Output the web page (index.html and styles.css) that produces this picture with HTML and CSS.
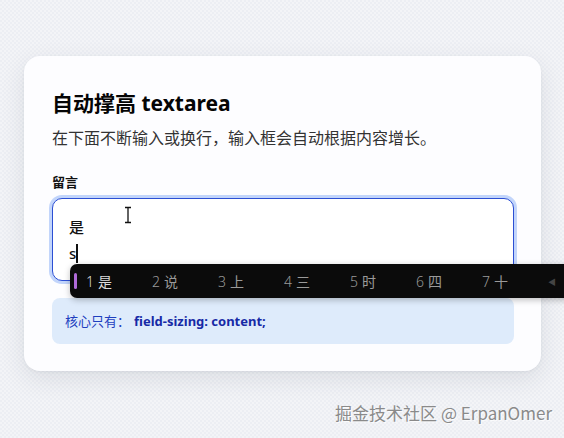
FILE: index.html
```html
<!DOCTYPE html>
<html lang="zh-CN">
<head>
<meta charset="utf-8">
<title>自动撑高 textarea</title>
<link rel="stylesheet" href="styles.css">
</head>
<body>
<main class="page">
  <section class="card">
    <h1 class="title">自动撑高 textarea</h1>
    <p class="desc">在下面不断输入或换行，输入框会自动根据内容增长。</p>
    <label class="label">留言</label>
    <div class="field">
      <div class="line">是</div>
      <div class="line">s<span class="caret"></span></div>
      <svg class="ibeam" width="10" height="18" viewBox="0 0 10 18">
        <path d="M2 1.5h6M2 16.5h6M5 1.5v15" stroke="#111" stroke-width="1.3" fill="none"/>
      </svg>
    </div>
    <div class="note">核心只有：<b class="code">field-sizing: content;</b></div>
  </section>
  <div class="ime">
    <span class="ime-mark"></span>
    <span class="cand active"><i>1</i>是</span>
    <span class="cand"><i>2</i>说</span>
    <span class="cand"><i>3</i>上</span>
    <span class="cand"><i>4</i>三</span>
    <span class="cand"><i>5</i>时</span>
    <span class="cand"><i>6</i>四</span>
    <span class="cand"><i>7</i>十</span>
    <span class="ime-arrow">◀</span>
  </div>
  <footer class="watermark">掘金技术社区 @ ErpanOmer</footer>
</main>
</body>
</html>
```

FILE: styles.css
```css
html, body {
  margin: 0;
  padding: 0;
}
body {
  width: 564px;
  height: 438px;
  overflow: hidden;
  background: #eceef3;
  background-image:
    linear-gradient(45deg, rgba(255,255,255,0.35) 25%, transparent 25%, transparent 75%, rgba(255,255,255,0.35) 75%),
    linear-gradient(45deg, rgba(255,255,255,0.35) 25%, transparent 25%, transparent 75%, rgba(255,255,255,0.35) 75%);
  background-size: 4px 4px;
  background-position: 0 0, 2px 2px;
  font-family: "Noto Sans", "Noto Sans CJK SC", sans-serif;
  color: #111;
}
.page {
  position: relative;
  height: 438px;
  padding-top: 56px;
  box-sizing: border-box;
}
.card {
  margin-left: 24px;
  width: 517px;
  box-sizing: border-box;
  padding: 33px 27px 27px 28px;
  background: #fdfdff;
  border-radius: 16px;
  box-shadow: 0 8px 24px rgba(40, 50, 70, 0.10), 0 1px 3px rgba(40, 50, 70, 0.06);
  display: flex;
  flex-direction: column;
}
.title {
  margin: 0;
  font-size: 21px;
  line-height: 28px;
  font-weight: 700;
  font-family: "Noto Sans", "Noto Sans CJK SC", sans-serif;
  color: #050505;
}
.desc {
  margin: 9px 0 0;
  font-size: 16px;
  line-height: 24px;
  color: #333;
}
.label {
  margin-top: 22px;
  font-size: 13px;
  line-height: 20px;
  font-weight: 700;
  color: #111;
}
.field {
  position: relative;
  margin-top: 6px;
  border: 1.5px solid #2c4fd4;
  border-radius: 10px;
  box-shadow: 0 0 0 3px #c2d5fb;
  padding: 15px 16px 14px 16px;
  font-size: 15px;
  line-height: 26px;
  font-weight: 500;
  color: #111;
  background: #fff;
}
.line {
  height: 26px;
}
.caret {
  display: inline-block;
  width: 1.5px;
  height: 19px;
  background: #111;
  vertical-align: -4px;
}
.ibeam {
  position: absolute;
  left: 70px;
  top: 7px;
}
.note {
  margin-top: 17px;
  background: #deebfb;
  border-radius: 8px;
  padding: 14px 13px;
  font-size: 13px;
  line-height: 18px;
  color: #1f3fbf;
}
.code {
  margin-left: 4px;
  font-weight: 700;
  color: #1629a6;
}
.ime {
  position: absolute;
  left: 70px;
  top: 264px;
  width: 520px;
  height: 34px;
  background: #0b0b0b;
  border-radius: 7px;
  box-shadow: 0 2px 6px rgba(0,0,0,0.25);
  display: flex;
  align-items: center;
  padding-left: 4px;
  box-sizing: border-box;
  font-family: "Noto Sans CJK SC", "Noto Sans", sans-serif;
  font-size: 14px;
  color: #9a9a9a;
}
.ime-mark {
  width: 3px;
  height: 16px;
  border-radius: 2px;
  background: #b06ad8;
  margin-right: 9px;
}
.cand {
  width: 66px;
  flex: none;
  white-space: nowrap;
}
.cand i {
  font-style: normal;
  font-family: "Noto Sans", sans-serif;
  font-weight: 300;
  margin-right: 4px;
}
.cand.active {
  color: #dcdcdc;
}
.ime-arrow {
  font-size: 8px;
  color: #444;
}
.watermark {
  position: absolute;
  right: 12px;
  top: 401px;
  font-size: 17px;
  line-height: 24px;
  color: #8a8a8a;
  text-shadow: 1px 1px 0 rgba(255,255,255,0.8);
  font-family: "Noto Sans CJK SC", "Noto Sans", sans-serif;
}
```
